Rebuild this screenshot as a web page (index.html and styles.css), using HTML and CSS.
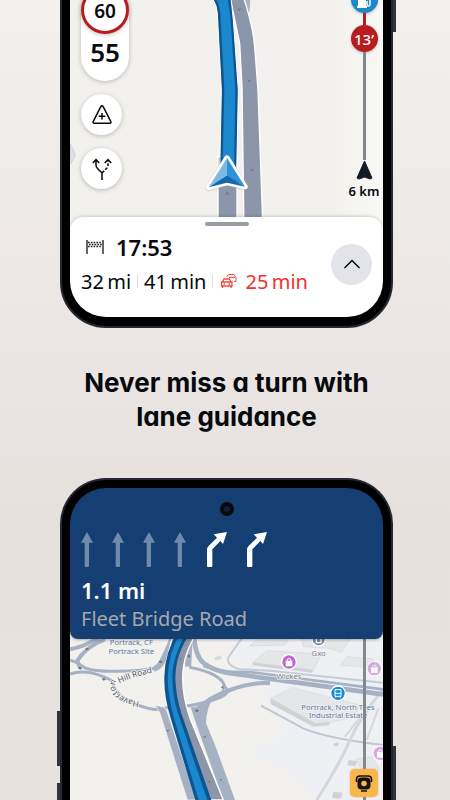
FILE: index.html
```html
<!DOCTYPE html>
<html lang="en">
<head>
    <meta charset="UTF-8">
    <meta name="viewport" content="width=device-width, initial-scale=1.0">
    <title>Lane guidance</title>
    <link rel="stylesheet" href="styles.css">
</head>
<body>
    <main class="page">
        <section class="phone phone-top">
            <div class="screen">
                <div class="map">
                    <svg class="map-art" viewBox="-390 -42 939 735" preserveAspectRatio="xMidYMin slice" aria-hidden="true">
                        <defs>
                            <linearGradient id="fade" x1="0" x2="1">
                                <stop offset="0" stop-color="#f8f8f6" stop-opacity="0"/>
                                <stop offset="1" stop-color="#f8f8f6"/>
                            </linearGradient>
                        </defs>
                        <rect x="-390" y="-42" width="939" height="735" fill="#f2f1ed"/>
                        <rect x="390" y="-42" width="159" height="735" fill="url(#fade)"/>
                        <path d="M-390 430l17 36-17 28z" fill="#dce0e8" stroke="#c3cad8" stroke-width="2"/>
                        <!-- roads -->
                        <path d="M120-42H152L150 20 145 55 130 10z" fill="#a9b4c5"/>
                        <path d="M80-42H120L140 22Q160 90 164 140L174 270 189 693H132L126 260 119 130 96 20z" fill="#8b96aa" stroke="#fff" stroke-width="4"/>
                        <path d="M54 470H111V693H54z" fill="#8b96aa" stroke="#fff" stroke-width="4"/>
                        <!-- route -->
                        <path d="M22-42L40 0Q50 15 52 40L64 270 59 520H110L115 270 100 60Q96 15 88-42z" fill="#0c5590" stroke="#fff" stroke-width="3"/>
                        <path d="M32-42L50 0Q58 15 61 40L73 270 67 520H102L106 270 92 60Q88 15 76-42z" fill="#1b87cd"/>
                        <g fill="#70757e">
                            <path d="M112 24l6 4 6-4-6 10z"/>
                            <path d="M141 237l6 4 6-4-6 10z"/>
                            <path d="M150 505l6 4 6-4-6 10z"/>
                            <path d="M76 586l6-4 6 4-6-12z"/>
                        </g>
                        <!-- current position -->
                        <path d="M81 474L135 562 81 550 26 564z" fill="#9a9fa8" stroke="#9a9fa8" stroke-width="20" stroke-linejoin="round" opacity=".3"/>
                        <path d="M81 474L135 560 81 548 26 562z" fill="#1c84ca" stroke="#fff" stroke-width="16" stroke-linejoin="round"/>
                        <path d="M81 474V527L26 562z" fill="#7cb9e2"/>
                        <path d="M81 474L135 560 81 527z" fill="#2d93d6"/>
                        <path d="M26 562L81 527 135 560 81 548z" fill="#1668aa"/>
                    </svg>
                    <div class="map-overlay">
                        <div class="controls">
                            <div class="speed">
                                <div class="limit">60</div>
                                <div class="current">55</div>
                            </div>
                            <button class="round-btn" aria-label="Report">
                                <svg viewBox="0 0 22 22" width="22" height="22">
                                    <path d="M9.800 2.700L2.300 17.300q-.9 1.900.9 1.900h15.600q1.800 0 .9-1.900L12.200 2.700q-1.200-2-2.400 0zM11 9v6.500M7.700 12.300h6.600"/>
                                </svg>
                            </button>
                            <button class="round-btn" aria-label="Alternative routes">
                                <svg viewBox="0 0 22 22" width="22" height="22">
                                    <path d="M11 22v-7L6.500 10.500Q5 9 5 7V2M1.800 5L5 1.500 8.200 5"/>
                                    <path d="M11 15l4.500-4.500Q17 9 17 7V2" stroke-dasharray="3 1.500"/>
                                    <path d="M13.800 5L17 1.500 20.200 5"/>
                                </svg>
                            </button>
                        </div>
                        <div class="rail">
                            <div class="badge fuel">
                                <svg viewBox="0 0 20 20" width="20" height="20">
                                    <path d="M4 2h8v14h1v2H3v-2h1z" fill="#fff"/>
                                    <path d="M13 6l3 3v5q0 2-1.500 2T13 14v-3" fill="none" stroke="#fff" stroke-width="1.500"/>
                                </svg>
                            </div>
                            <div class="line delay-line"></div>
                            <div class="badge delay">13’</div>
                            <div class="line rest-line"></div>
                            <svg class="rail-arrow" viewBox="0 0 17 20" width="17" height="20">
                                <path d="M8.500 1L16 18l-2 1-5.500-2L3 19l-2-1z" fill="#151b24" stroke="#151b24" stroke-linejoin="round"/>
                            </svg>
                            <div class="rail-label">6 km</div>
                        </div>
                    </div>
                </div>
                <div class="sheet">
                    <div class="handle"></div>
                    <div class="trip">
                        <div>
                            <div class="arrival">
                                <svg viewBox="0 0 20 16" width="20" height="16">
                                    <path d="M2 1v14M18 1v14" stroke="#000" stroke-width="1.200"/>
                                    <path d="M3 3.500h14M4 5.500h13M3 7.500h14" stroke="#222" stroke-width="1.500" stroke-dasharray="1.600 1.200"/>
                                </svg>
                                <span>17:53</span>
                            </div>
                            <div class="stats">
                                <span>32&#8201;mi</span>
                                <span class="divider"></span>
                                <span>41&#8201;min</span>
                                <span class="divider"></span>
                                <svg viewBox="0 0 20 16" width="20" height="16" fill="none" stroke="#f2473f">
                                    <path d="M3.500 9L5 6h5.500L12 9M2.500 9h10.500v4h-10.500zM3.500 13v2M12 13v2M4.500 11h1.500M9.500 11H11" stroke-width="1.300"/>
                                    <path d="M7.500 4L9.500 1.500h5.500L17 4.500v4h-2M10 4.500h6" stroke-width="1"/>
                                </svg>
                                <span class="late">25&#8201;min</span>
                            </div>
                        </div>
                        <button class="expand" aria-label="Expand">
                            <svg viewBox="0 0 18 12" width="18" height="12">
                                <path d="M1.500 10L9 2.500 16.500 10"/>
                            </svg>
                        </button>
                    </div>
                </div>
            </div>
        </section>

        <h1 class="title">Never miss a turn with<br>lane guidance</h1>

        <section class="phone phone-bottom">
            <div class="screen">
                <div class="guidance">
                    <div class="camera"></div>
                    <div class="lanes">
                        <svg class="lane" viewBox="93 186 36 105" width="12" height="35"><path d="M111 186L129 218H117V288q0 3-3 3h-7q-3 0-3-3V218H93z"/></svg>
                        <svg class="lane" viewBox="93 186 36 105" width="12" height="35"><path d="M111 186L129 218H117V288q0 3-3 3h-7q-3 0-3-3V218H93z"/></svg>
                        <svg class="lane" viewBox="93 186 36 105" width="12" height="35"><path d="M111 186L129 218H117V288q0 3-3 3h-7q-3 0-3-3V218H93z"/></svg>
                        <svg class="lane" viewBox="93 186 36 105" width="12" height="35"><path d="M111 186L129 218H117V288q0 3-3 3h-7q-3 0-3-3V218H93z"/></svg>
                        <svg class="lane active" viewBox="465 186 66 105" width="22" height="35"><path d="M531 186L519 222 511 213 487 238V288q0 3-3 3h-10q-3 0-3-3V238q0-5 4-9L501 203 491 193z"/></svg>
                        <svg class="lane active" viewBox="468 186 66 105" width="22" height="35"><path d="M531 186L519 222 511 213 487 238V288q0 3-3 3h-10q-3 0-3-3V238q0-5 4-9L501 203 491 193z"/></svg>
                    </div>
                    <div class="distance">1.1 mi</div>
                    <div class="street">Fleet Bridge Road</div>
                </div>
                <div class="map map-junction">
                    <svg class="map-art" viewBox="60 3 939 507" preserveAspectRatio="xMidYMin slice">
                        <rect x="60" y="3" width="939" height="507" fill="#f2f1ed"/>
                        <path d="M560 3H999V510H800L700 420 580 365 705 310 650 200 540 60z" fill="#eef0f3"/>
                        <!-- buildings -->
                        <g fill="#e5e6e8" stroke="#d6d8da" stroke-width="2">
                            <path d="M640 10H725L705 45 600 48z"/>
                            <path d="M650 62L815 72 790 120 608 98z"/>
                            <path d="M750 10L820 15 900 28 875 68 840 55 760 50z"/>
                            <path d="M890 80L970 86V112L872 106z"/>
                            <path d="M728 173L930 225 915 258 815 285 795 280 662 205z"/>
                            <path d="M918 387L965 380 990 420 950 450z"/>
                        </g>
                        <g fill="#d0d2d4">
                            <path d="M608 98L790 120 785 128 608 106z"/>
                            <path d="M662 205L795 280 838 276V286L790 290 662 222z"/>
                            <path d="M852 340l15-3-2 10-14 2zM896 390l26 3-6 16-24-3zM850 485l28 3-6 18-26-2z"/>
                        </g>
                        <path d="M495 82l14-6 8 7-12 8-12-2z" fill="#d8d9da"/>
                        <!-- minor streets -->
                        <g fill="none" stroke="#c5ccd7" stroke-width="6">
                            <path d="M575 25L535 82Q528 108 570 118L660 122 999 158"/>
                            <path d="M633 227L760 295Q830 325 999 345" stroke="#bdc7d3"/>
                            <path d="M998 180Q930 260 900 330T800 510" stroke="#d4d7dd" stroke-width="9"/>
                            <path d="M885 320L920 275 975 210M950 330L985 235" stroke="#d4d7dd"/>
                        </g>
                        <!-- main roads -->
                        <g fill="none" stroke="#a6b2c3" stroke-width="9">
                            <path d="M60 58Q105 50 150 20M165 28Q110 48 82 92Q86 108 96 116" stroke-width="12"/>
                            <path d="M60 90Q80 96 100 110T200 124 330 112"/>
                            <path d="M60 132Q100 118 150 136T190 165Q200 200 260 224T350 233Q430 230 490 210T525 172Q515 130 418 112"/>
                            <path d="M432 18Q436 80 462 100T530 128L600 138 999 193" stroke-width="14"/>
                            <path d="M460 108Q520 130 600 126L999 178" stroke-width="8"/>
                            <path d="M440 240Q470 205 540 180T660 160" stroke-width="12"/>
                            <path d="M420 20Q415 60 414 110" stroke-width="20"/>
                            <path d="M368 25Q350 70 338 92T312 116" stroke-width="18"/>
                        </g>
                        <path d="M316 226L345 232Q352 245 358 265L440 510H412L330 250z" fill="#a6b2c3" stroke="#f8f8f6" stroke-width="2"/>
                        <path d="M422 232Q450 232 492 200 468 235 468 280L495 345 555 510H520L445 300z" fill="#a6b2c3"/>
                        <path d="M512 142Q540 172 508 200 526 172 512 142z" fill="#a6b2c3"/>
                        <!-- route -->
                        <path d="M372 3H445Q398 70 398 145 398 200 420 265L520 510H440L398 370 358 240Q340 160 350 90z" fill="#8d96a8" stroke="#fff" stroke-width="4"/>
                        <path d="M385 3H425Q376 70 376 145 378 200 394 250L484 510H436L362 265Q342 200 343 145 342 70 385 3z" fill="#0c5590"/>
                        <path d="M394 3H412Q366 80 367 145 368 200 384 250L472 510H446L372 265Q354 200 353 145 354 70 394 3z" fill="#1b87cd"/>
                        <g fill="#70757e">
                            <path d="M325 94l8-2 6 3-8 5zM106 55l8-1 3 4-8 3zM84 112l8-1 3 5-8 2zM155 147l6-3 7 4-7 4zM387 82l6 4 5-5-6 10zM412 78l5-5 5 5-5 6zM512 172l8-4v8zM434 240l8-2 5 5-8 4zM347 299l6 2 5-4-4 9zM458 317l6 3 6-4-5 9zM472 452l6 3 6-4-5 9zM506 446l6 3 6-4-5 9z"/>
                        </g>
                        <!-- labels -->
                        <g class="place">
                            <text x="244" y="45">Portrack, CF</text>
                            <text x="244" y="71">Portrack Site</text>
                            <text x="864" y="239">Portrack, North Tees</text>
                            <text x="864" y="265">Industrial Estate</text>
                        </g>
                        <g class="shop">
                            <text x="806" y="79">Gxo</text>
                            <text x="717" y="146">Wickes</text>
                        </g>
                        <path id="hill" d="M208 160Q255 138 320 125" fill="none"/>
                        <path id="haverton" d="M268 214Q225 208 206 190T200 150" fill="none"/>
                        <text class="road"><textPath href="#hill">Hill Road</textPath></text>
                        <text class="road"><textPath href="#haverton">Haverton</textPath></text>
                        <!-- pins -->
                        <circle cx="806" cy="28" r="20" fill="#74869f" stroke="#fff" stroke-width="4"/>
                        <path d="M799 22h14v16h-14z" fill="none" stroke="#fff" stroke-width="4"/>
                        <g id="shop-pin">
                            <circle cx="717" cy="96" r="22" fill="#be68cf" stroke="#fff" stroke-width="4"/>
                            <path d="M707 92h20v17h-20z" fill="#fff"/>
                            <path d="M712 93v-5q5-6 10 0v5" fill="none" stroke="#fff" stroke-width="3"/>
                        </g>
                        <use href="#shop-pin" x="256" y="20" opacity=".5"/>
                        <use href="#shop-pin" x="274" y="274" opacity=".5"/>
                        <circle cx="864" cy="190" r="22" fill="#198bd0" stroke="#fff" stroke-width="4"/>
                        <path d="M855 179h18v20h-18zM855 190h18M857 199v4M871 199v4" fill="none" stroke="#fff" stroke-width="3"/>
                    </svg>
                    <div class="map-overlay">
                        <div class="rail">
                            <div class="line junction-line"></div>
                            <div class="speed-camera">
                                <svg viewBox="0 0 28 28" width="28" height="28">
                                    <path d="M6.500 13V10.500Q6.500 7 10 7h8q3.500 0 3.500 3.500V13" fill="none" stroke="#17130d" stroke-width="1.600"/>
                                    <rect x="7.500" y="8.500" width="13" height="12" rx="4" fill="#17130d"/>
                                    <circle cx="14" cy="14.500" r="2.800" fill="#f8b64c"/>
                                    <path d="M11 22h6" stroke="#17130d" stroke-width="1.500"/>
                                </svg>
                            </div>
                            <div class="line end-line"></div>
                        </div>
                    </div>
                </div>
            </div>
        </section>
    </main>
</body>
</html>
```
FILE: styles.css
```css
:root {
    --navy: #153e73;
    --blue: #1b87cd;
    --red: #b91c1f;
    --frame: #252832;
    --font: "Noto Sans", sans-serif;
}

* {
    box-sizing: border-box;
}

body {
    margin: 0;
    font-family: var(--font);
    color: #06090d;
}

.page {
    height: 100vh;
    overflow: hidden;
    display: flex;
    flex-direction: column;
    padding: 0 57px 0 60px;
    background: linear-gradient(#f3f0ed, #ebe6e4 42%, #e6e1dd 65%, #e8e2de);
}

.phone {
    position: relative;
    background: #000;
    border: 2px solid var(--frame);
    padding: 8px;
}

.phone::before,
.phone::after {
    content: "";
    position: absolute;
    width: 3px;
    background: #30333c;
}

.phone-top {
    flex: none;
    margin-top: -24px;
    border-radius: 0 0 46px 46px;
    padding-bottom: 9px;
}

.phone-top::after {
    right: -5px;
    top: 0;
    height: 54px;
}

.phone-bottom {
    flex: 1;
    display: flex;
    border-bottom: 0;
    border-radius: 46px 46px 0 0;
    padding-bottom: 0;
}

.phone-bottom::before {
    left: -5px;
    top: 231px;
    height: 55px;
    box-shadow: 0 72px 0 #30333c;
}

.phone-bottom::after {
    right: -5px;
    top: 266px;
    height: 60px;
}

.screen {
    flex: 1;
    display: flex;
    flex-direction: column;
    overflow: hidden;
}

.phone-top .screen {
    border-radius: 0 0 36px 36px;
}

.phone-bottom .screen {
    border-radius: 36px 36px 0 0;
}

/* map */
.map {
    position: relative;
    overflow: hidden;
    background: #f2f1ed;
}

.map-art {
    position: absolute;
    inset: 0;
    width: 100%;
    height: 100%;
}

.map-overlay {
    position: relative;
    display: flex;
    justify-content: space-between;
    padding: 0 4px 29px 11px;
}

.controls {
    display: flex;
    flex-direction: column;
    gap: 13px;
}

.speed {
    width: 48px;
    height: 95px;
    border-radius: 24px;
    background: #fff;
    box-shadow: 0 1px 4px rgba(60, 50, 45, 0.3);
    text-align: center;
    font-weight: 600;
}

.limit {
    height: 48px;
    padding-top: 12px;
    border: 3px solid var(--red);
    border-radius: 50%;
    background: #fff;
    box-shadow: 0 1px 4px rgba(60, 50, 45, 0.3);
    font-size: 19px;
    line-height: 20px;
}

.current {
    font-size: 26px;
    line-height: 36px;
}

.round-btn,
.expand {
    display: flex;
    align-items: center;
    justify-content: center;
    width: 41px;
    height: 41px;
    padding: 0;
    border: none;
    border-radius: 50%;
    background: #fff;
    cursor: pointer;
}

.round-btn {
    box-shadow: 0 1px 4px rgba(60, 50, 45, 0.3);
}

.round-btn svg,
.expand svg {
    fill: none;
    stroke: #06090d;
    stroke-width: 1.5;
}

.rail {
    display: flex;
    flex-direction: column;
    align-items: center;
    width: 30px;
    margin-left: auto;
}

.badge {
    display: flex;
    align-items: center;
    justify-content: center;
    width: 27px;
    height: 27px;
    border-radius: 50%;
    color: #fff;
    font-size: 15px;
    font-weight: 500;
    box-shadow: 0 1px 3px rgba(0, 0, 0, 0.25);
}

.fuel {
    background: var(--blue);
}

.delay {
    background: var(--red);
}

.line {
    width: 3px;
    background: #85878e;
}

.delay-line {
    height: 12px;
    background: var(--red);
}

.rest-line {
    height: 108px;
}

.rail-label {
    font-size: 13px;
    font-weight: 600;
    line-height: 22px;
    white-space: nowrap;
}

/* trip sheet */
.sheet {
    position: relative;
    margin-top: -14px;
    padding: 5px 11px 19px;
    border-radius: 14px 14px 0 0;
    background: #fff;
    box-shadow: 0 -1px 3px rgba(60, 50, 45, 0.2);
}

.handle {
    width: 44px;
    height: 4px;
    margin: 0 auto 4px;
    border-radius: 2px;
    background: #999ca5;
}

.trip {
    display: flex;
    align-items: center;
    justify-content: space-between;
}

.arrival,
.stats {
    display: flex;
    align-items: center;
    height: 34px;
    white-space: nowrap;
}

.arrival {
    gap: 11px;
    padding-left: 4px;
    font-size: 22px;
    font-weight: 600;
}

.stats {
    gap: 6px;
    font-size: 20px;
}

.divider {
    width: 1px;
    height: 13px;
    background: #dcdee2;
}

.late {
    color: #f5302d;
}

.expand {
    background: #e3e4ea;
}

/* headline */
.title {
    margin: 38px 0 44px;
    font-family: Inter, sans-serif;
    font-feature-settings: "cv11";
    font-size: 26px;
    font-weight: 700;
    line-height: 34px;
    text-align: center;
    white-space: nowrap;
}

/* guidance panel */
.guidance {
    position: relative;
    z-index: 1;
    padding: 14px 11px 5px;
    border-radius: 0 0 8px 8px;
    background: var(--navy);
    box-shadow: 0 1px 3px rgba(0, 0, 0, 0.3);
}

.camera {
    width: 14px;
    height: 14px;
    margin: 0 auto 16px;
    border: 4px solid #07090d;
    border-radius: 50%;
    background: #171d2c;
}

.lanes {
    display: flex;
    gap: 19px;
    margin-bottom: 9px;
}

.lane {
    fill: #7189aa;
}

.active {
    fill: #fff;
}

.distance {
    color: #fff;
    font-size: 22px;
    font-weight: 600;
    line-height: 28px;
}

.street {
    color: #a5a9ae;
    font-size: 20px;
    line-height: 30px;
}

.map-junction {
    flex: 1;
    margin-top: -8px;
}

.map-junction .map-overlay {
    height: 100%;
    padding-bottom: 0;
}

.junction-line {
    flex: 1;
}

.end-line {
    height: 3px;
}

.speed-camera {
    width: 28px;
    height: 28px;
    border-radius: 5px;
    background: #f8b64c;
    box-shadow: 0 0 2px #e2a78b;
}

.place,
.shop {
    font-size: 23px;
    text-anchor: middle;
    stroke: #f4f5f5;
    stroke-width: 4px;
    paint-order: stroke;
}

.place {
    fill: #58779b;
}

.shop {
    fill: #7b7e84;
}

.road {
    font-size: 25px;
    fill: #53585f;
    stroke: #f4f5f5;
    stroke-width: 5px;
    paint-order: stroke;
}
```
